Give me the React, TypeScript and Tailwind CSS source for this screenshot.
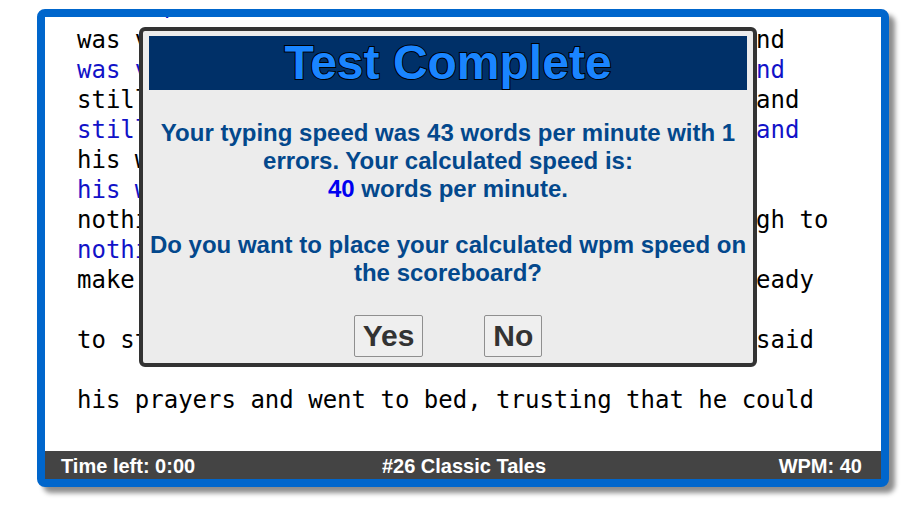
import React from "react";

type Line = { text: string; typed?: boolean };

const lines: Line[] = [
  { text: "Once upon a time there was a shoemaker who was,", typed: true },
  { text: "was very good and honest, but times were hard and" },
  { text: "was very good and honest, but times were hard and", typed: true },
  { text: "still he could not earn enough to keep living, and" },
  { text: "still he could not earn enough to keep living, and", typed: true },
  { text: "his workshop was bare, and at last there was" },
  { text: "his workshop was bare, and at last there was", typed: true },
  { text: "nothing remained but a bit of leather just enough to" },
  { text: "nothing remained but a bit of leather just", typed: true },
  { text: "make a pair of shoes. So he cut them out, all ready" },
  { text: "", typed: true },
  { text: "to stitch up the next morning. That evening he said" },
  { text: "", typed: true },
  { text: "his prayers and went to bed, trusting that he could" },
  { text: "", typed: true },
];

const App = () => {
  return (
    <div className="min-h-screen bg-white pt-[9px] pl-[37px]">
      <div className="relative flex h-[478px] w-[852px] flex-col rounded-lg border-8 border-[#0066cc] bg-white shadow-[6px_6px_5px_rgba(0,0,0,0.45)]">
        {/* passage, scrolled part way down */}
        <div className="flex-1 overflow-hidden">
          <div className="mt-[-27px] pl-8 font-['DejaVu_Sans_Mono',monospace] text-[24px] leading-[30px]">
            {lines.map((line, i) => (
              <div
                key={i}
                className={`whitespace-pre ${i === 0 ? "h-[35px]" : "h-[30px]"} ${line.typed ? "text-[#1212c8]" : "text-black"}`}
              >
                {line.text}
              </div>
            ))}
          </div>
        </div>

        {/* status bar */}
        <div className="grid h-[28px] grid-cols-3 items-center bg-[#444444] pl-4 pr-[19px] font-['Liberation_Sans',Arial,sans-serif] text-[20px] font-bold text-white">
          <span>Time left: 0:00</span>
          <span className="pl-[5px] text-center">#26 Classic Tales</span>
          <span className="text-right">WPM: 40</span>
        </div>

        {/* result dialog */}
        <div className="absolute left-[94px] top-[10px] w-[618px] rounded-md border-4 border-[#333333] bg-[#ececec] px-[6px] pt-[5px] pb-[6px] font-['Liberation_Sans',Arial,sans-serif]">
          <div className="flex h-[54px] items-center justify-center bg-[#003068]">
            <h1 className="text-[48px] font-bold leading-none text-[#1a85ff] [-webkit-text-stroke:2px_#000] [paint-order:stroke_fill]">
              Test Complete
            </h1>
          </div>
          <p className="mt-[29px] text-center text-[24px] font-bold leading-[28px] text-[#03488c]">
            Your typing speed was 43 words per minute with 1
            <br />
            errors. Your calculated speed is:
            <br />
            <span className="text-[#0000f0]">40</span> words per minute.
            <br />
            <br />
            Do you want to place your calculated wpm speed on
            <br />
            the scoreboard?
          </p>
          <div className="mt-[28px] flex justify-center gap-[61px]">
            <button className="h-[42px] rounded-[2px] border border-[#8f8f8f] bg-[#efefef] px-2 text-[30px] font-bold leading-[34px] text-[#333333]">
              Yes
            </button>
            <button className="h-[42px] rounded-[2px] border border-[#8f8f8f] bg-[#efefef] px-2 text-[30px] font-bold leading-[34px] text-[#333333]">
              No
            </button>
          </div>
        </div>
      </div>
    </div>
  );
};

export default App;
